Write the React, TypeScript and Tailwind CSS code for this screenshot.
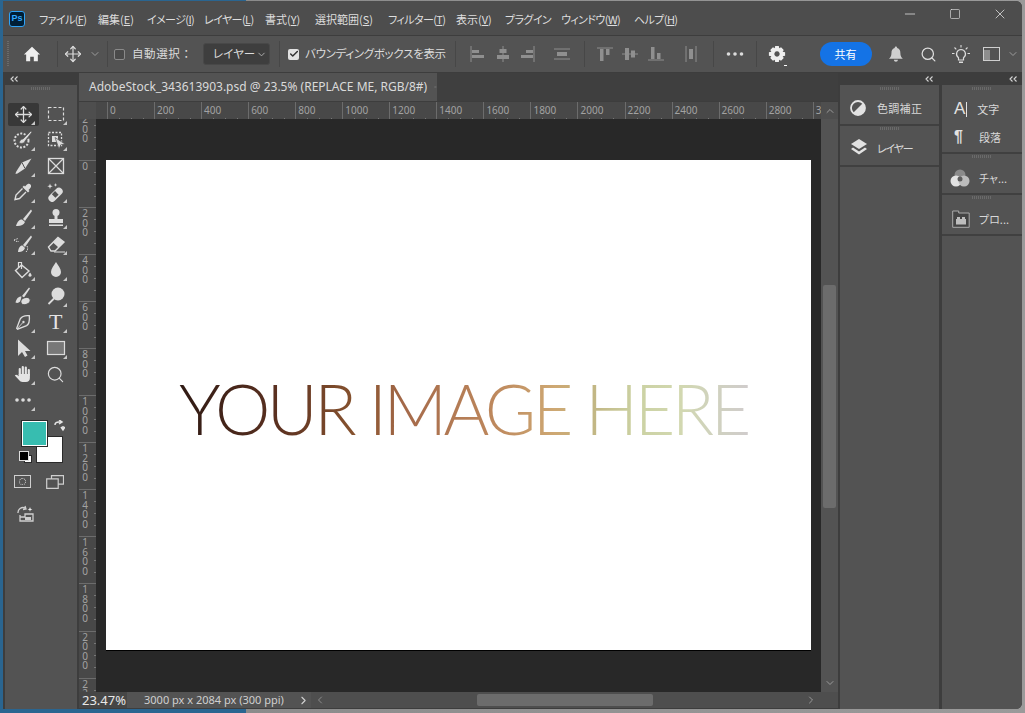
import React from "react";
import { Move, Search, ChevronDown, ChevronUp, ChevronLeft, ChevronRight, Check, X, Minus, Square } from "lucide-react";

const I = ({ children, s = 20, c = "" }: { children: React.ReactNode; s?: number; c?: string }) => (
  <svg width={s} height={s} viewBox="0 0 20 20" className={c}>{children}</svg>
);
const L = "#dcdcdc";
const BG = "#535353";

const Corner = () => (
  <svg width="4" height="4" viewBox="0 0 4 4" className="absolute right-[4px] bottom-[1px]"><path d="M4 0V4H0Z" fill="#c8c8c8" /></svg>
);

const Collapse = () => (
  <svg width="8" height="6" viewBox="0 0 8 6"><path d="M3.500 .5 1 3l2.500 2.500M7.500 .5 5 3l2.500 2.500" fill="none" stroke="#d4d4d4" strokeWidth="1.100" /></svg>
);

const tools: { n: React.ReactNode; corner?: boolean; sel?: boolean }[] = [
  { n: <Move size={19} color={L} strokeWidth={1.6} />, sel: true, corner: true },
  { n: <I><rect x="2.500" y="3.500" width="15" height="13" fill="none" stroke={L} strokeWidth="1.200" strokeDasharray="3 2" /></I>, corner: true },
  { n: <I><circle cx="8.500" cy="10.500" r="7" fill="none" stroke={L} strokeWidth="2" strokeDasharray="2 1.500" /><path d="M6 13c1-3 2-4 4-4l8-8 1 1-7 9c0 2-3 3-6 2Z" fill={L} stroke={BG} strokeWidth=".7" /></I>, corner: true },
  { n: <I><rect x="2.500" y="2.500" width="13" height="13" fill="none" stroke={L} strokeWidth="1.300" strokeDasharray="2 1.500" /><rect x="6" y="6" width="6" height="6" fill={L} /><path d="M9 7.500 19 14l-4.200.8L13 19Z" fill={L} stroke={BG} strokeWidth=".7" /></I>, corner: true },
  { n: <I><path d="M18.500 2.500 9 6.500 3 16l-.5 2 2-.5L12 12.500Z" fill={L} /><path d="M9 6.500 12 12.500" stroke={BG} strokeWidth="1" /></I>, corner: true },
  { n: <I><rect x="2.500" y="2.500" width="15" height="15" fill="none" stroke={L} strokeWidth="1.300" /><path d="M2.500 2.500 17.500 17.500M17.500 2.500 2.500 17.500" stroke={L} strokeWidth="1.300" /></I> },
  { n: <I><path d="M9.500 6.500 3 13l-1 4.500 4.500-1L13 10" fill="none" stroke={L} strokeWidth="1.400" /><path d="M13 3.500c1.500-2 3.500-2 4.500-1s.8 3-1 4.500L15.500 8l1 1-1.500 1.500L9.500 5 11 3.500l1 1Z" fill={L} /></I>, corner: true },
  { n: <I><rect x="1" y="9" width="17" height="7.500" rx="3.700" transform="rotate(-45 9.500 12.700)" fill={L} /><rect x="7" y="10" width="4.500" height="5" transform="rotate(-45 9.200 12.500)" fill={BG} /><path d="M4 1.500l.7 2 2 .7-2 .7L4 7l-.7-2-2-.7 2-.7ZM9.500 1l.5 1.400 1.400.5-1.400.5-.5 1.400-.5-1.400-1.400-.5 1.400-.5Z" fill={L} /></I>, corner: true },
  { n: <I><path d="M18 1.500 10 11l2 2 7-10Z" fill={L} /><path d="M9 11.500c-2.500 0-4.500 1.500-6 6.500 4 .5 8-1 9-4Z" fill={L} /></I>, corner: true },
  { n: <I><circle cx="10" cy="4.500" r="3.500" fill={L} /><rect x="8.500" y="7" width="3" height="4" fill={L} /><path d="M3 11h14v4H3ZM3 16.500h14V18H3Z" fill={L} /></I>, corner: true },
  { n: <I><path d="M18 1.500 10 11l2 2 7-10Z" fill={L} /><path d="M9.500 11.500c-2 0-4 1.500-4.500 6.500 3 .5 6-1 7-4Z" fill={L} /><path d="M1 6l4-1.500M1 6c.5 1 2 1.500 5 1.500M14 12c1 2 1 4-1 6" stroke={L} strokeWidth="1" strokeDasharray="1.500 1" fill="none" /></I>, corner: true },
  { n: <I><path d="M2.500 13 12 3.500 18 8l-9 9H5Z" fill="none" stroke={L} strokeWidth="1.400" /><path d="M7 8.500 12 3.500 18 8 12.500 13.500Z" fill={L} /><path d="M8 18h11" stroke={L} strokeWidth="1" /></I>, corner: true },
  { n: <I><path d="M8.500 5 2.500 10.500 9 17.500l7-6.500Z" fill="none" stroke={L} strokeWidth="1.400" /><path d="M5.500 8V2.500h3V9" fill="none" stroke={L} strokeWidth="1.200" /><path d="M17 12.500c1.200 1.500 2 2.500 1.500 3.500s-2.500 1-3 0 .5-2 1.500-3.500Z" fill={L} /></I>, corner: true },
  { n: <I><path d="M10 2c2 3.500 5 6.500 5 10a5 5 0 0 1-10 0c0-3.500 3-6.500 5-10Z" fill={L} /></I>, corner: true },
  { n: <I><path d="M16 1.500 9 10l2 1.500 6-9Z" fill={L} /><path d="M8.500 10.500C6 10.500 3.500 12 2.500 16.500c2 1 4 0 5-1.500" fill={L} /><ellipse cx="12.500" cy="15" rx="4.800" ry="3.500" fill={L} stroke={BG} strokeWidth="1" transform="rotate(-20 12.500 15)" /></I> },
  { n: <I><circle cx="12" cy="8" r="6.500" fill={L} /><path d="M8 12.500 2.500 18" stroke={L} strokeWidth="1.800" /></I>, corner: true },
  { n: <I s={18}><path d="M17 3c-5-.5-8.500 1-10 3.500L3 17l1 1 10-4c2.500-1.500 3.500-6 3-11Z" fill="none" stroke={L} strokeWidth="1.500" /><circle cx="10.500" cy="10" r="1.300" fill={L} /><path d="M4 17 9.500 11" stroke={L} strokeWidth="1" /></I>, corner: true },
  { n: <span className="font-['Liberation_Serif',serif] text-[22px] text-[#e4e4e4] leading-none">T</span>, corner: true },
  { n: <I><path d="M5 1.500V18l4-4 3 5 2.500-1.500L12 13h5.500Z" fill={L} /></I>, corner: true },
  { n: <I><rect x="1.500" y="3.500" width="17" height="13" fill="#787878" stroke={L} strokeWidth="1.200" /></I>, corner: true },
  { n: <I><path d="M6.800 11V5M9.800 10V3M12.800 10V3.500M15.800 11V6" stroke="#e4e4e4" strokeWidth="2.200" strokeLinecap="round" fill="none" /><path d="M5.700 10h11.200v4c0 2.500-1.500 4-4 4H9.500c-1.500 0-2.500-1-3.500-2L1.800 11.500c.7-1 1.800-1 2.800-.2l1.100 1Z" fill="#e4e4e4" /></I>, corner: true },
  { n: <Search size={19} color={L} strokeWidth={1.5} /> },
  { n: <I><circle cx="4" cy="10" r="1.800" fill={L} /><circle cx="10" cy="10" r="1.800" fill={L} /><circle cx="16" cy="10" r="1.800" fill={L} /></I>, corner: true },
];

const menus: [string, string, number][] = [
  ["ファイル", "F", 47], ["編集", "E", 37], ["イメージ", "I", 45], ["レイヤー", "L", 49], ["書式", "Y", 38],
  ["選択範囲", "S", 61], ["フィルター", "T", 56], ["表示", "V", 37], ["プラグイン", "", 44], ["ウィンドウ", "W", 61], ["ヘルプ", "H", 45],
];

const Sep = ({ ml }: { ml: number }) => <div className="w-px h-[26px] bg-[#474747] shrink-0" style={{ marginLeft: ml }} />;
const D = "#8f8f8f";

const Align = ({ k }: { k: number }) => {
  const p: Record<number, React.ReactNode> = {
    0: <><path d="M4 2v16" stroke={D} /><rect x="5" y="6" width="7" height="3" fill={D} /><rect x="5" y="11" width="12" height="3" fill={D} /></>,
    1: <><path d="M10 2v16" stroke={D} /><rect x="6.500" y="5" width="7" height="4" fill={D} /><rect x="4" y="11" width="12" height="4" fill={D} /></>,
    2: <><path d="M16 2v16" stroke={D} /><rect x="8" y="6" width="7" height="3" fill={D} /><rect x="3" y="11" width="12" height="3" fill={D} /></>,
    3: <><path d="M2 5h16M2 15h16" stroke={D} /><rect x="5" y="8" width="10" height="4" fill={D} /></>,
    4: <><path d="M2 4h16" stroke={D} /><rect x="5" y="5" width="3.500" height="12" fill={D} /><rect x="11" y="5" width="3.500" height="6" fill={D} /></>,
    5: <><path d="M2 10h16" stroke={D} /><rect x="5" y="4" width="4" height="12" fill={D} /><rect x="11" y="6.500" width="4" height="7" fill={D} /></>,
    6: <><path d="M2 16h16" stroke={D} /><rect x="5" y="3" width="3.500" height="12" fill={D} /><rect x="11" y="9" width="3.500" height="6" fill={D} /></>,
    7: <><path d="M5 2v16M15 2v16" stroke={D} /><rect x="8" y="5" width="4" height="10" fill={D} /></>,
  };
  return <I>{p[k]}</I>;
};

const Grip = () => <div className="w-[20px] h-[3px] mx-auto bg-[repeating-linear-gradient(90deg,#6a6a6a_0,#6a6a6a_1px,transparent_1px,transparent_2px)]" />;

const TopRuler = () => {
  const labels = [0, 200, 400, 600, 800, 1000, 1200, 1400, 1600, 1800, 2000, 2200, 2400, 2600, 2800, 3000];
  return (
    <div className="w-[725px] shrink-0 overflow-hidden flex pl-[11px]">
      {labels.map((v) => (
        <div key={v} className="w-[47.06px] shrink-0 h-[18px] border-l border-[#6c6c6c] pl-[2px] text-[10px] leading-[17px] text-[#a2a2a2] relative">
          {v}
          <div className="absolute left-0 right-0 bottom-0 h-[2px] bg-[repeating-linear-gradient(90deg,transparent_0,transparent_11px,#777_11px,#777_12px)]" />
        </div>
      ))}
    </div>
  );
};

const LeftRuler = () => {
  const labels = ["200", "0", "200", "400", "600", "800", "1000", "1200", "1400", "1600", "1800", "2000", "22"];
  return (
    <div className="w-[17px] bg-[#484848] overflow-hidden shrink-0">
      <div className="mt-[-6px]">
        {labels.map((v, i) => (
          <div key={i} className="h-[47.06px] border-t border-[#6c6c6c] flex flex-col items-center pr-[5px] pt-[1px] text-[10px] leading-[9.500px] text-[#a2a2a2] overflow-hidden relative">
            {v.split("").map((d, j) => <span key={j}>{d}</span>)}
            <div className="absolute right-0 top-0 bottom-0 w-[2px] bg-[repeating-linear-gradient(180deg,transparent_0,transparent_11px,#777_11px,#777_12px)]" />
          </div>
        ))}
      </div>
    </div>
  );
};

export default function App() {
  return (
    <div className="w-[1025px] h-[713px] overflow-hidden pt-[1px] px-[3px] pb-[4px] bg-[linear-gradient(90deg,#2a6590_0,#2a6590_24%,#8b8b8b_24%,#9a9a9a_100%)] font-['Noto_Sans_CJK_JP','Noto_Sans',sans-serif]">
      <div className="w-full h-full flex flex-col bg-[#3d3d3d] rounded-tr-[6px] rounded-br-[6px] overflow-hidden">
        {/* title bar */}
        <div className="h-[35px] shrink-0 bg-[#4d4d4d] flex items-start border-b border-[#3d3d3d]">
          <div className="ml-[6px] mt-[10px] w-[16px] h-[16px] rounded-[3px] bg-[#001e36] border border-[#2fa3f7] text-[#31a8ff] text-[9px] leading-[13px] text-center font-bold font-['Liberation_Sans',sans-serif] shrink-0">Ps</div>
          <div className="flex gap-[12px] ml-[14px] mt-[9px] text-[11px] leading-[18px] text-[#dedede] [font-feature-settings:'palt']">
            {menus.map(([m, k, w]) => (
              <span key={m} className={`whitespace-nowrap shrink-0 ${/[ァ-ヶ]/.test(m[0]) ? "tracking-[-0.6px]" : ""}`} style={{ width: w }}>
                {m}{k && <>(<span className="underline">{k}</span>)</>}
              </span>
            ))}
          </div>
          <div className="ml-auto flex items-start text-[#dedede] pt-[5px] pr-[14px]">
            <Minus size={16} strokeWidth={1.2} className="mr-[31px]" />
            <Square size={12} strokeWidth={1.3} className="mr-[31px] mt-[2px]" />
            <X size={16} strokeWidth={1.2} />
          </div>
        </div>
        {/* options bar */}
        <div className="h-[37px] shrink-0 bg-[#535353] flex items-center border-b border-[#3d3d3d] text-[11.5px] text-[#dcdcdc]">
          <div className="ml-[4px] w-[2px] h-[26px] bg-[repeating-linear-gradient(180deg,#6a6a6a_0,#6a6a6a_1px,transparent_1px,transparent_2px)]" />
          <div className="ml-[14px] w-[18px] flex"><I s={18}><path d="M10 2 1 10.500h2.500V18H8v-5h4v5h4.500v-7.500H19Z" fill="#efefef" /></I></div>
          <Sep ml={16} />
          <div className="ml-[6px] flex"><Move size={18} color={L} strokeWidth={1.6} /></div>
          <ChevronDown size={12} color="#9c9c9c" className="ml-[7px]" />
          <Sep ml={6} />
          <div className="ml-[6px] w-[11px] h-[11px] rounded-[2px] border border-[#8a8a8a] bg-[#4a4a4a] shrink-0" />
          <span className="ml-[7px] w-[58px] tracking-[0.6px] whitespace-nowrap">自動選択：</span>
          <div className="ml-[13px] w-[67px] h-[22px] rounded-[3px] bg-[#3e3e3e] border border-[#484848] flex items-center pl-[9px] whitespace-nowrap shrink-0 [font-feature-settings:'palt']">
            <span className="w-[38px]">レイヤー</span><ChevronDown size={11} color="#b4b4b4" className="ml-[5px]" />
          </div>
          <Sep ml={9} />
          <div className="ml-[8px] w-[11px] h-[11px] rounded-[2px] bg-[#e2e2e2] flex items-center justify-center shrink-0"><Check size={10} color="#333" strokeWidth={3.5} /></div>
          <span className="ml-[6px] w-[134px] shrink-0 tracking-[-0.3px] whitespace-nowrap [font-feature-settings:'palt']">バウンディングボックスを表示</span>
          <Sep ml={16} />
          <div className="ml-[11px] flex gap-[5.5px]"><Align k={0} /><Align k={1} /><Align k={2} /></div>
          <div className="ml-[13.5px]"><Align k={3} /></div>
          <Sep ml={12} />
          <div className="ml-[10px] flex gap-[5.5px]"><Align k={4} /><Align k={5} /><Align k={6} /></div>
          <div className="ml-[15px]"><Align k={7} /></div>
          <Sep ml={12} />
          <div className="ml-[11px]"><I><circle cx="3.500" cy="10" r="1.800" fill={L} /><circle cx="10" cy="10" r="1.800" fill={L} /><circle cx="16.500" cy="10" r="1.800" fill={L} /></I></div>
          <Sep ml={11} />
          <div className="ml-[11px] w-[18px] relative flex"><I s={18}><path fillRule="evenodd" d="M8 1h4l.5 2.500 2-1 3 3-1.200 2L19 8v4l-2.700.5 1.200 2-3 3-2-1.200L12 19H8l-.5-2.700-2 1.200-3-3 1.200-2L1 12V8l2.700-.5-1.200-2 3-3 2 1.200ZM10 7a3 3 0 1 0 .01 0Z" fill="#eee" /></I><div className="absolute -right-[1px] -bottom-[3px] w-[3px] h-px bg-white" /></div>
          <div className="ml-[34px] w-[52px] h-[24px] rounded-full bg-[#1473e6] text-white text-center text-[11px] leading-[24px] shrink-0">共有</div>
          <div className="ml-[15px] flex"><I s={18}><path d="M9 1.500c.8 0 1.200.6 1.300 1.500 2.500.6 3.200 2.800 3.200 5 0 3 1 4.500 2.500 6H2c1.500-1.500 2.500-3 2.500-6 0-2.200.7-4.400 3.200-5C7.800 2.100 8.200 1.500 9 1.500Z M7 15h4c0 1.300-.8 2-2 2s-2-.7-2-2Z" transform="scale(1.100)" fill="#cfcfcf" /></I></div>
          <Search size={17} color="#dcdcdc" strokeWidth={1.8} className="ml-[15px]" />
          <div className="ml-[15px] flex">
            <svg width="18" height="20" viewBox="0 0 18 20"><path d="M9 5.500a4.500 4.500 0 0 0-2.500 8.200V16h5v-2.300A4.500 4.500 0 0 0 9 5.500Z" fill="none" stroke="#dcdcdc" strokeWidth="1.200" /><path d="M7 17.500h4v1.500H7Z" fill="#dcdcdc" /><path d="M9 1v2.500M2.500 3.500l1.800 1.800M15.500 3.500l-1.800 1.800M0 9.500h2.500M15.500 9.500H18" stroke="#dcdcdc" strokeWidth="1.100" /></svg>
          </div>
          <div className="ml-[13.5px] w-[17px] h-[14px] border-[1.5px] border-[#cfcfcf] flex shrink-0"><div className="w-[6px] bg-[#8d8d8d] mt-[2px]" /></div>
          <ChevronDown size={12} color="#9c9c9c" className="ml-[7px]" />
        </div>
        {/* body */}
        <div className="flex-1 min-h-0 flex">
          {/* tools */}
          <div className="w-[76px] shrink-0 flex flex-col px-[2px]">
            <div className="h-[12px] flex items-center pl-[5px]"><Collapse /></div>
            <div className="flex-1 bg-[#535353]">
              <div className="pt-[2px]"><Grip /></div>
              <div className="grid grid-cols-2 grid-rows-[repeat(12,26px)] mt-[11px] pl-[2px] pr-[5px]">
                {tools.map((t, i) => (
                  <div key={i} className="flex items-center justify-center">
                    <div className={`relative w-[31px] h-[23px] flex items-center justify-center ${t.sel ? "bg-[#383838] rounded-[2px]" : ""}`}>
                      {t.n}
                      {t.corner && <Corner />}
                    </div>
                  </div>
                ))}
              </div>
              <div className="relative h-[50px]">
                <div className="absolute left-[32px] top-[24px] w-[25px] h-[25px] bg-white outline outline-[#2a2a2a]" />
                <div className="absolute left-[17px] top-[8px] w-[25px] h-[25px] bg-[#37bdb0] border border-white outline outline-[#2a2a2a]" />
                <svg width="12" height="12" viewBox="0 0 12 12" className="absolute left-[48px] top-[7px]"><path d="M2 5c0-2 2-3 4-3h2M6 0l3 2-3 2M10 6v3M8 7l2 3 2-3" fill="none" stroke="#e4e4e4" strokeWidth="1.500" /></svg>
                <div className="absolute left-[20px] top-[43px] w-[6px] h-[6px] bg-white outline outline-[#2a2a2a]" />
                <div className="absolute left-[15px] top-[39px] w-[8px] h-[8px] bg-black outline outline-[#ddd]" />
              </div>
              <div className="flex justify-between pl-[9px] pr-[11px] mt-[12px]">
                <div className="w-[17px] h-[13px] border border-[#cfcfcf] flex items-center justify-center"><div className="w-[7px] h-[7px] rounded-full border border-dotted border-[#cfcfcf]" /></div>
                <div className="relative mr-[2px] flex">
                  <svg width="18" height="14" viewBox="0 0 18 14"><path d="M5.500 3.500V.7h12v8.500h-5M.7 3.800h11.500v9.500H.7Z" fill="none" stroke="#cfcfcf" strokeWidth="1.200" /></svg>
                </div>
              </div>
              <div className="ml-[11px] mt-[16px]">
                <svg width="18" height="18" viewBox="0 0 18 18"><path d="M2 8a5 5 0 0 1 7-5M9 1l1 3-3 .5" fill="none" stroke="#cfcfcf" strokeWidth="1.300" /><path d="M4 10v6h13v-7H9v3H4Z" fill="none" stroke="#cfcfcf" strokeWidth="1.300" /><rect x="9" y="12" width="6" height="3" fill="#cfcfcf" /><path d="M14 2l.6 1.800 1.800.6-1.800.6-.6 1.800-.6-1.800-1.800-.6 1.800-.6Z" fill="#eee" /></svg>
              </div>
            </div>
          </div>
          {/* document */}
          <div className="w-[759px] shrink-0 flex flex-col mb-[1px]">
            <div className="h-[28px] shrink-0 bg-[#3f3f3f] flex">
              <div className="w-[358px] bg-[#535353] flex items-center pl-[10px] text-[12px] text-[#dadada] font-['Noto_Sans',sans-serif] whitespace-nowrap">
                <span>AdobeStock_343613903.psd @ 23.5% (REPLACE ME, RGB/8#)</span>
                <X size={10} color="#a8a8a8" className="ml-[7px]" />
              </div>
            </div>
            <div className="h-[18px] shrink-0 flex bg-[#484848] border-t border-[#3d3d3d] font-['Noto_Sans',sans-serif]">
              <div className="w-[17px] shrink-0 bg-[#4e4e4e]" />
              <TopRuler />
              <div className="flex-1 flex items-center justify-center bg-[#4e4e4e]"><ChevronUp size={12} color="#9a9a9a" /></div>
            </div>
            <div className="flex-1 min-h-0 flex font-['Noto_Sans',sans-serif]">
              <LeftRuler />
              <div className="w-[725px] shrink-0 bg-[#282828] pl-[10px] pt-[41px]">
                <div className="w-[705px] h-[490px] bg-white flex items-center justify-center pl-[10px] pt-[5px] shadow-[0_1px_0_#000]">
                  <span className="text-[70px] leading-none font-light tracking-[-3.5px] whitespace-nowrap font-['Lato',sans-serif] bg-[linear-gradient(90deg,#2f1a14_0%,#5a3020_17%,#8a5530_32%,#a56a4a_40%,#bd875c_55%,#cea873_66%,#c1b380_72%,#cbd1a2_80%,#d2d8b0_88%,#d0d3bc_93%,#d0cccc_100%)] bg-clip-text text-transparent">YOUR IMAGE HERE</span>
                </div>
              </div>
              <div className="w-[17px] shrink-0 bg-[#535353] flex flex-col items-center">
                <div className="mt-[166px] w-[13px] h-[223px] bg-[#6c6c6c] rounded-[2px] shrink-0" />
                <ChevronDown size={12} color="#9a9a9a" className="mt-auto mb-[3px]" />
              </div>
            </div>
            <div className="h-[16px] shrink-0 flex bg-[#4b4b4b] text-[11px] leading-[16px] font-['Noto_Sans',sans-serif]">
              <div className="w-[48px] pl-[3px] text-[13px] text-[#e8e8e8] bg-[#464646]">23.47%</div>
              <div className="w-[184px] flex items-center pl-[17px] bg-[#535353] text-[#cfcfcf]">
                <span className="whitespace-nowrap">3000 px x 2084 px (300 ppi)</span>
                <ChevronRight size={13} color="#d0d0d0" className="ml-auto mr-[1px]" />
              </div>
              <div className="flex-1 flex items-center bg-[#4e4e4e] pl-[3px]">
                <ChevronLeft size={12} color="#8c8c8c" />
                <div className="ml-[151px] w-[176px] h-[12px] bg-[#6c6c6c] rounded-[2px]" />
                <ChevronRight size={12} color="#9a9a9a" className="ml-auto mr-[21px]" />
              </div>
            </div>
          </div>
          {/* right panels */}
          <div className="w-[99px] shrink-0 ml-[2px] flex flex-col">
            <div className="h-[12px] flex items-center justify-end pr-[6px]"><Collapse /></div>
            <div className="flex-1 bg-[#535353]">
              <div className="h-[41px] border-b-2 border-[#404040] pt-[2px]">
                <Grip />
                <div className="flex items-center mt-[7px]">
                  <div className="w-[39px] flex justify-end pr-[13px] mt-[3px]"><svg width="16" height="16" viewBox="0 0 16 16"><circle cx="8" cy="8" r="7" fill="none" stroke="#e2e2e2" strokeWidth="1.800" /><path d="M13 3 3 13a7 7 0 0 0 10-10Z" fill="#e2e2e2" /></svg></div>
                  <span className="ml-[-2px] mt-[3px] text-[11px] text-[#d8d8d8] tracking-[0.3px] whitespace-nowrap">色調補正</span>
                </div>
              </div>
              <div className="h-[41px] border-b-2 border-[#404040] pt-[1px]">
                <Grip />
                <div className="flex items-center mt-[10px]">
                  <div className="w-[39px] flex justify-end pr-[11px] mt-[-2px]"><svg width="18" height="18" viewBox="0 0 18 18"><path d="M9 1 17 6 9 11 1 6Z" fill="#e2e2e2" /><path d="M3 9.500 1 11l8 5.500 8-5.500-2-1.500-6 4Z" fill="#e2e2e2" /></svg></div>
                  <span className="ml-[-2px] text-[11px] text-[#d8d8d8] tracking-[-1.2px] whitespace-nowrap [font-feature-settings:'palt']">レイヤー</span>
                </div>
              </div>
            </div>
          </div>
          <div className="flex-1 min-w-0 ml-[3px] flex flex-col">
            <div className="h-[12px] flex items-center justify-end pr-[5px]"><Collapse /></div>
            <div className="flex-1 bg-[#535353] text-[11px] text-[#d8d8d8]">
              <div className="h-[69px] border-b-2 border-[#404040] pt-[2px]">
                <Grip />
                <div className="flex items-center mt-[9px] pl-[12px]"><span className="text-[17px] leading-[20px] font-['Liberation_Sans',sans-serif] text-[#e2e2e2]">A</span><div className="w-px h-[15px] bg-[#e2e2e2] ml-[1px]" /><span className="ml-[10px]">文字</span></div>
                <div className="flex items-center mt-[8px] pl-[12px]"><span className="w-[14px] text-[16px] leading-[20px] font-['Liberation_Sans',sans-serif] font-bold text-[#e2e2e2]">¶</span><span className="ml-[11px]">段落</span></div>
              </div>
              <div className="h-[41px] border-b-2 border-[#404040] pt-[1px]">
                <Grip />
                <div className="flex items-center mt-[11px] pl-[8px]"><svg width="20" height="18" viewBox="0 0 20 18"><circle cx="10" cy="6" r="5.500" fill="#8a8a8a" /><circle cx="6" cy="12" r="5.500" fill="#e2e2e2" /><circle cx="14" cy="12" r="5.500" fill="#bcbcbc" /><circle cx="10" cy="10" r="2.500" fill="#5c5c5c" /></svg><span className="ml-[9px] [font-feature-settings:'palt']">チャ...</span></div>
              </div>
              <div className="h-[41px] border-b-2 border-[#404040] pt-[1px]">
                <Grip />
                <div className="flex items-center mt-[11px] pl-[10px]"><svg width="18" height="18" viewBox="0 0 18 18"><path d="M.7 1h6v2h10.500v14.300H.7Z" fill="#444" stroke="#aaa" strokeWidth="1" /><rect x="4" y="9" width="10" height="5.500" fill="#bdbdbd" /><rect x="5" y="7" width="3" height="2" fill="#bdbdbd" /><rect x="10" y="7" width="3" height="2" fill="#bdbdbd" /></svg><span className="ml-[9px] [font-feature-settings:'palt']">プロ...</span></div>
              </div>
            </div>
          </div>
        </div>
      </div>
    </div>
  );
}
